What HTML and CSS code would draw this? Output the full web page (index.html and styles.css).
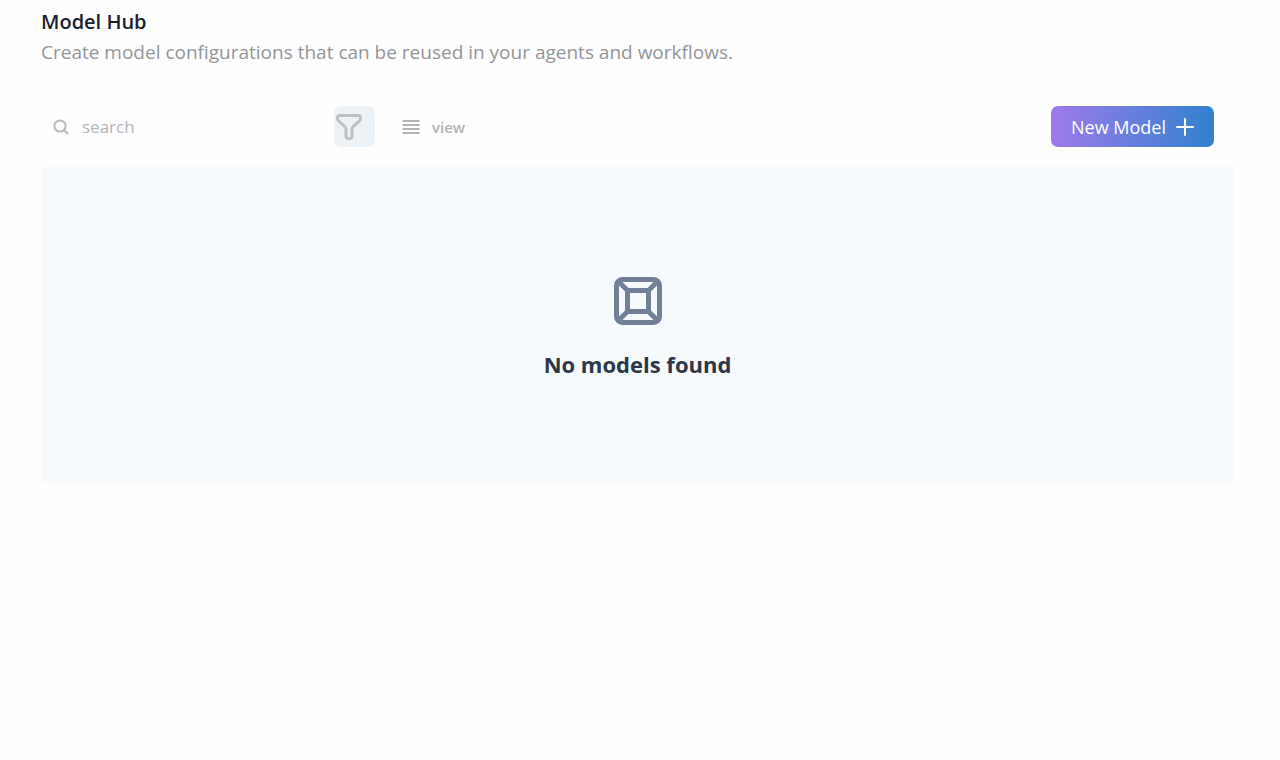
FILE: index.html
```html
<!DOCTYPE html>
<html lang="en">
<head>
    <meta charset="UTF-8">
    <meta name="viewport" content="width=device-width, initial-scale=1.0">
    <title>Model Hub</title>
    <link rel="stylesheet" href="styles.css">
</head>
<body>
    <main class="page">
        <header class="heading">
            <h1>Model Hub</h1>
            <p>Create model configurations that can be reused in your agents and workflows.</p>
        </header>

        <div class="toolbar">
            <label class="search">
                <svg class="search-icon" viewBox="0 0 16 16" aria-hidden="true">
                    <circle cx="7" cy="7" r="5.6"/>
                    <path d="M11.2 11.2L15 15"/>
                </svg>
                <input type="text" placeholder="search" aria-label="search">
            </label>
            <button type="button" class="filter-button" aria-label="Filter">
                <svg viewBox="0 0 26 26" aria-hidden="true">
                    <path d="M3.2 1.5H22.8A1.7 1.7 0 0 1 24.5 3.2V4.6Q24.5 5.8 23.5 6.8L17.2 12.6Q16 13.8 16 15.4V22.4A2 2 0 0 1 14 24.5H12A2 2 0 0 1 10 22.4V15.4Q10 13.8 8.8 12.6L2.5 6.8Q1.5 5.8 1.5 4.6V3.2A1.7 1.7 0 0 1 3.2 1.5Z"/>
                </svg>
            </button>
            <button type="button" class="view-button">
                <svg viewBox="0 0 18 14" aria-hidden="true">
                    <path d="M0.5 1H17.5M0.5 5H17.5M0.5 9H17.5M0.5 13H17.5"/>
                </svg>
                view
            </button>
            <button type="button" class="new-button">
                New Model
                <svg viewBox="0 0 18 18" aria-hidden="true">
                    <path d="M9 1V17M1 9H17"/>
                </svg>
            </button>
        </div>

        <section class="empty">
            <svg class="empty-icon" viewBox="0 0 48 48" aria-hidden="true">
                <rect x="2.5" y="2.5" width="43" height="43" rx="6"/>
                <rect x="13.5" y="13.5" width="21" height="21"/>
                <path d="M3.5 3.5L13.5 13.5M44.5 3.5L34.5 13.5M3.5 44.5L13.5 34.5M44.5 44.5L34.5 34.5"/>
            </svg>
            <h2>No models found</h2>
        </section>
    </main>
</body>
</html>
```

FILE: styles.css
```css
* {
    box-sizing: border-box;
}
body {
    margin: 0;
    background-color: #fefefe;
    color: #1a202c;
    font-family: "Segoe UI", "Open Sans", sans-serif;
}
.page {
    padding: 7px 46px 40px 41px;
}
.heading h1 {
    margin: 0;
    font-size: 20px;
    font-weight: 600;
    line-height: 30px;
}
.heading p {
    margin: 0;
    color: #929698;
    font-size: 19px;
    line-height: 30px;
}
button {
    border: none;
    cursor: pointer;
    font-family: inherit;
}
svg {
    fill: none;
    stroke: currentColor;
    flex-shrink: 0;
}
.toolbar {
    display: flex;
    align-items: center;
    height: 41px;
    margin: 39px 0 20px;
    padding-right: 20px;
}
.search {
    display: flex;
    align-items: center;
    gap: 13px;
    width: 293px;
    padding-left: 12px;
    color: #b8bcbf;
}
.search-icon {
    width: 16px;
    height: 16px;
    stroke-width: 2;
}
.search input {
    flex: 1;
    min-width: 0;
    padding: 0;
    border: none;
    outline: none;
    background: transparent;
    color: #4a5568;
    font-family: inherit;
    font-size: 17px;
    line-height: 24px;
}
.search input::placeholder {
    color: #b2b4b6;
    opacity: 1;
}
.filter-button {
    display: flex;
    align-items: center;
    width: 41px;
    height: 41px;
    padding: 0 0 0 2px;
    border-radius: 7px;
    background-color: #edf2f7;
    color: #bcc1c6;
}
.filter-button svg {
    width: 26px;
    height: 26px;
    stroke-width: 3;
}
.view-button {
    display: flex;
    align-items: center;
    gap: 12px;
    margin-left: 27px;
    padding: 0;
    background: transparent;
    color: #b2b4b6;
    font-size: 15px;
    font-weight: 600;
    line-height: 24px;
}
.view-button svg {
    width: 18px;
    height: 14px;
    stroke-width: 2;
}
.new-button {
    display: flex;
    align-items: center;
    gap: 10px;
    height: 41px;
    margin-left: auto;
    padding: 0 20px;
    border-radius: 7px;
    background: linear-gradient(to right, #9f7aea, #3182ce);
    color: #fff;
    font-size: 18px;
}
.new-button svg {
    width: 18px;
    height: 18px;
    stroke-width: 2;
    stroke-linecap: round;
}
.empty {
    display: flex;
    flex-direction: column;
    align-items: center;
    padding: 110px 20px 102px;
    background-color: #f7fafc;
}
.empty-icon {
    width: 48px;
    height: 48px;
    color: #718096;
    stroke-width: 5;
}
.empty h2 {
    margin: 22px 0 0;
    color: #2d3748;
    font-size: 22px;
    font-weight: 700;
    line-height: 34px;
}
```
